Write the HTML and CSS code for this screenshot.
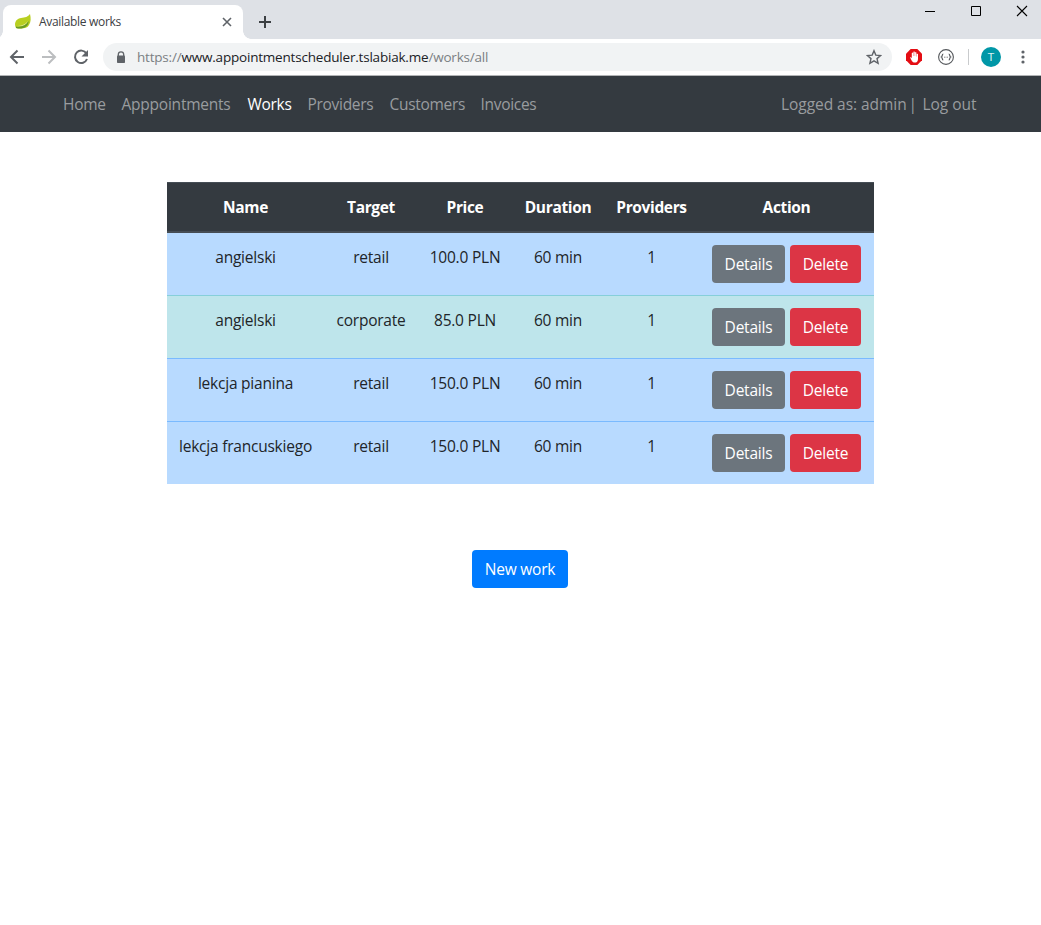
FILE: index.html
```html
<!DOCTYPE html>
<html lang="en">
<head>
<meta charset="utf-8">
<title>Available works</title>
<link rel="stylesheet" href="styles.css">
</head>
<body>
<header class="browser">
  <div class="tabstrip">
    <div class="tab">
      <svg class="leaf" width="18" height="18" viewBox="0 0 18 18"><path d="M16 1c1 4 1 8-1 11-2 4-8 4-13 3C0 11 1 6 7 5c4-.5 7-1 9-4Z" fill="#b8cf20"/><path d="M2 13c5 0 9-1 12-5-2 5-6 6-12 5Z" fill="#e5ed99"/><path d="M2 13.400c5 1 10-1 12.500-5.400C15 14 8 17 2 15Z" fill="#699b25"/></svg>
      <span class="tab-title">Available works</span>
      <svg class="tab-close" width="10" height="10" viewBox="0 0 10 10"><path d="M1 1l8 8M9 1L1 9" stroke="#5f6368" stroke-width="1.600"/></svg>
    </div>
    <svg class="plus" width="12" height="12" viewBox="0 0 12 12"><path d="M6 0v12M0 6h12" stroke="#3c4043" stroke-width="2"/></svg>
    <div class="window-controls">
      <svg width="12" height="12" viewBox="0 0 12 12"><path d="M1 6.500h10" stroke="#000"/></svg>
      <svg width="12" height="12" viewBox="0 0 12 12"><path d="M1.500 1.500h9v9h-9z" fill="none" stroke="#000"/></svg>
      <svg width="12" height="12" viewBox="0 0 12 12"><path d="M1 1l10 10M11 1L1 11" stroke="#000" stroke-width="1.100"/></svg>
    </div>
  </div>
  <div class="toolbar">
    <svg class="back" width="16" height="16" viewBox="0 0 16 16"><path d="M15 8H2M8.500 1.500L2 8l6.500 6.500" fill="none" stroke="#5f6368" stroke-width="2"/></svg>
    <svg class="forward" width="16" height="16" viewBox="0 0 16 16"><path d="M1 8h13M7.500 1.500L14 8l-6.500 6.500" fill="none" stroke="#bcbec0" stroke-width="2"/></svg>
    <svg class="reload" width="16" height="16" viewBox="0 0 16 16"><path d="M13.400 4.400A6.200 6.200 0 1 0 14 10" fill="none" stroke="#5f6368" stroke-width="2"/><path d="M15 1v6.500H8.500Z" fill="#5f6368"/></svg>
    <div class="omnibox">
      <svg class="lock" width="10" height="13" viewBox="0 0 10 13"><path d="M2.300 5V3.500a2.700 2.700 0 0 1 5.400 0V5" fill="none" stroke="#5f6368" stroke-width="1.300"/><rect x="1" y="4.500" width="8" height="7.500" rx=".8" fill="#5f6368"/></svg>
      <span class="url">https://<b>www.appointmentscheduler.tslabiak.me</b>/works/all</span>
      <svg class="star" width="16" height="16" viewBox="0 0 16 16"><path d="M8 1.700l1.800 4.400 4.800.4-3.600 3.100 1.100 4.700L8 11.800l-4.100 2.500L5 9.600 1.400 6.500l4.800-.4Z" fill="none" stroke="#5f6368" stroke-width="1.400"/></svg>
    </div>
    <svg class="blocker" width="16" height="16" viewBox="0 0 16 16"><path d="M4.700 0h6.600L16 4.700v6.600L11.300 16H4.700L0 11.300V4.700Z" fill="#e40d13"/><path d="M4 8.300c.8-.4 1.300.2 1.800 1V4q.7-.8 1.300 0v3h.3V2.800q.7-.8 1.400 0V7h.3V3.500q.7-.8 1.300 0v4h.3V5q.7-.7 1.300 0v5c0 2.500-1.200 3.600-3.400 3.600C6 13.600 5.500 11 4 8.300Z" fill="#fff"/></svg>
    <svg class="braces" width="16" height="16" viewBox="0 0 16 16"><circle cx="8" cy="8" r="7.400" fill="none" stroke="#55585c" stroke-width="1.100"/><path d="M5.300 5C3.900 5 4.600 7.500 3.500 8c1.100.5.400 3 1.800 3M10.700 5c1.400 0 .7 2.500 1.800 3-1.100.5-.4 3-1.800 3" fill="none" stroke="#55585c" stroke-width="1.200"/><path d="M6 8.200h4" stroke="#888" stroke-dasharray="1 .5"/></svg>
    <span class="divider"></span>
    <span class="avatar">T</span>
    <svg class="dots" width="4" height="14" viewBox="0 0 4 14"><g fill="#5f6368"><circle cx="2" cy="2" r="1.600"/><circle cx="2" cy="7" r="1.600"/><circle cx="2" cy="12" r="1.600"/></g></svg>
  </div>
</header>
<nav class="navbar">
  <a class="home">Home</a><a class="appointments">Apppointments</a><a class="works">Works</a><a class="providers">Providers</a><a class="customers">Customers</a><a class="invoices">Invoices</a>
  <div class="session"><span class="user">Logged as: admin</span><span class="bar">|</span><a class="logout">Log out</a></div>
</nav>
<main>
  <div class="table">
    <div class="row head"><span>Name</span><span>Target</span><span>Price</span><span>Duration</span><span>Providers</span><span>Action</span></div>
    <div class="row first"><span>angielski</span><span>retail</span><span>100.0 PLN</span><span>60 min</span><span>1</span><div class="actions"><a class="btn details">Details</a><a class="btn delete">Delete</a></div></div>
    <div class="row corporate"><span>angielski</span><span>corporate</span><span>85.0 PLN</span><span>60 min</span><span>1</span><div class="actions"><a class="btn details">Details</a><a class="btn delete">Delete</a></div></div>
    <div class="row"><span>lekcja pianina</span><span>retail</span><span>150.0 PLN</span><span>60 min</span><span>1</span><div class="actions"><a class="btn details">Details</a><a class="btn delete">Delete</a></div></div>
    <div class="row"><span>lekcja francuskiego</span><span>retail</span><span>150.0 PLN</span><span>60 min</span><span>1</span><div class="actions"><a class="btn details">Details</a><a class="btn delete">Delete</a></div></div>
  </div>
  <a class="btn new">New work</a>
</main>
</body>
</html>
```
FILE: styles.css
```css
* { box-sizing: border-box; }
body { margin: 0; height: 925px; overflow: hidden; background: #fff; color: #212529; font: 15.5px/24px "Open Sans", "Noto Sans", sans-serif; letter-spacing: -.22px; white-space: nowrap; }
svg { display: block; flex: none; }
.browser { height: 76px; border-bottom: 1px solid #b2b4b6; letter-spacing: 0; }
.tabstrip { height: 39px; background: #dee1e6; display: flex; padding-left: 3px; }
.tab { width: 240px; height: 34px; margin-top: 5px; background: #fff; border-radius: 8px 8px 0 0; display: flex; align-items: center; padding: 0 11px; position: relative; }
.tab::before, .tab::after { content: ""; position: absolute; bottom: 0; width: 8px; height: 8px; }
.tab::before { left: -8px; background: radial-gradient(circle at 0 0, transparent 7.500px, #fff 8px); }
.tab::after { right: -8px; background: radial-gradient(circle at 100% 0, transparent 7.500px, #fff 8px); }
.tab-title { margin-left: 7px; font-size: 12px; letter-spacing: -.32px; color: #3c4043; }
.tab-close { margin-left: auto; }
.plus { margin: 16px 0 0 16px; }
.window-controls { display: flex; gap: 34px; margin: 5px 13px 0 auto; }
.toolbar { height: 36px; display: flex; align-items: center; padding-left: 9px; }
.forward { margin-left: 16px; }
.reload { margin-left: 16px; }
.omnibox { width: 789px; height: 28px; margin-left: 14px; border-radius: 14px; background: #f1f3f4; display: flex; align-items: center; padding: 0 10px 0 13px; }
.url { margin-left: 11px; font-size: 13.5px; letter-spacing: -.2px; color: #7b7f83; }
.url b { color: #202124; font-weight: 400; }
.star { margin-left: auto; }
.blocker { margin-left: 14px; }
.braces { margin-left: 16px; }
.divider { width: 1px; height: 16px; background: #c9cbcd; margin-left: 14px; }
.avatar { width: 20px; height: 20px; border-radius: 50%; background: #0097a7; color: #d9f0f2; font: 11.5px/21px Roboto, sans-serif; text-align: center; margin-left: 12px; }
.dots { margin-left: 20px; }
.navbar { height: 56px; background: #343a40; color: #999c9f; display: flex; align-items: center; padding: 0 64px 1px 63px; letter-spacing: -.3px; }
.home { width: 58.5px; }
.appointments { width: 126px; letter-spacing: -.23px; }
.works { width: 60px; color: #fff; }
.providers { width: 82px; }
.customers { width: 91px; }
.session { margin-left: auto; width: 196px; display: flex; letter-spacing: -.05px; }
.user { width: 127.5px; }
.bar { width: 14px; }
main { display: flex; flex-direction: column; align-items: center; padding-top: 50px; }
.table { width: 707px; }
.row { display: grid; grid-template-columns: 157px 94px 94px 92px 95px 175px; height: 63px; padding-top: 12px; background: #b8daff; border-top: 1px solid #7abaff; text-align: center; }
.row.head { height: 51px; background: #343a40; border: 1px solid #454d55; border-width: 1px 0 2px; color: #fff; font-weight: 700; letter-spacing: -.35px; }
.row.first { height: 62px; border-top: 0; }
.row.corporate { background: #bee5eb; border-top-color: #86cfda; }
.actions { display: flex; gap: 5px; padding-left: 13px; }
.btn { height: 38px; padding-top: 7px; border-radius: 4px; color: #fff; text-align: center; }
.details { width: 73px; background: #6c757d; }
.delete { width: 71px; background: #dc3545; }
.new { width: 96px; margin: 66px 1px 0 0; background: #007bff; }
```
